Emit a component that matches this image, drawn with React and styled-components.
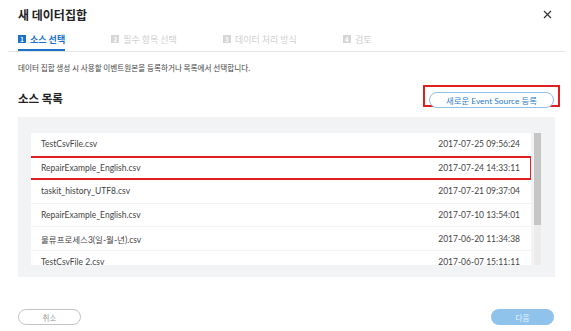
import React from "react";
import styled, { createGlobalStyle } from "styled-components";

const GlobalStyle = createGlobalStyle`
  html, body { margin: 0; padding: 0; background: #fff; }
  body { font-family: Lato, "Noto Sans CJK KR", sans-serif; color: #333; }
`;

const steps = [
  { no: 1, label: "소스 선택" },
  { no: 2, label: "필수 항목 선택" },
  { no: 3, label: "데이터 처리 방식" },
  { no: 4, label: "검토" },
];

const sources = [
  { name: "TestCsvFile.csv", date: "2017-07-25 09:56:24" },
  { name: "RepairExample_English.csv", date: "2017-07-24 14:33:11", picked: true },
  { name: "taskit_history_UTF8.csv", date: "2017-07-21 09:37:04" },
  { name: "RepairExample_English.csv", date: "2017-07-10 13:54:01" },
  { name: "물류프로세스3(일-월-년).csv", date: "2017-06-20 11:34:38" },
  { name: "TestCsvFile 2.csv", date: "2017-06-07 15:11:11" },
];

export default function App() {
  return (
    <>
      <GlobalStyle />
      <Dialog>
        <Header>
          <Title>새 데이터집합</Title>
          <CloseButton aria-label="close">
            <svg width="9" height="9" viewBox="0 0 9 9">
              <path d="M1 1 L8 8 M8 1 L1 8" stroke="#333" strokeWidth="1.2" />
            </svg>
          </CloseButton>
        </Header>

        <Tabs>
          {steps.map((s) => (
            <Tab key={s.no} $active={s.no === 1}>
              <Badge $active={s.no === 1}>{s.no}</Badge>
              {s.label}
            </Tab>
          ))}
        </Tabs>

        <Description>
          데이터 집합 생성 시 사용할 이벤트원본을 등록하거나 목록에서 선택합니다.
        </Description>

        <SectionHead>
          <SectionTitle>소스 목록</SectionTitle>
          <Highlight>
            <OutlineButton>새로운 Event Source 등록</OutlineButton>
          </Highlight>
        </SectionHead>

        <Panel>
          <Viewport>
            {sources.map((s, i) => (
              <Row key={i} $picked={s.picked}>
                <span>{s.name}</span>
                <span>{s.date}</span>
              </Row>
            ))}
          </Viewport>
          <ScrollTrack>
            <ScrollThumb />
          </ScrollTrack>
        </Panel>

        <Footer>
          <CancelButton>취소</CancelButton>
          <NextButton>다음</NextButton>
        </Footer>
      </Dialog>
    </>
  );
}

const Dialog = styled.div`
  width: 571px;
  height: 331px;
  overflow: hidden;
  display: flex;
  flex-direction: column;
`;

const Header = styled.div`
  display: flex;
  justify-content: space-between;
  align-items: center;
  height: 22px;
  padding: 3px 18px 0 18px;
`;

const Title = styled.h1`
  margin: 0;
  font-size: 12px;
  font-weight: 700;
  color: #222;
  font-family: "Noto Sans CJK KR", sans-serif;
`;

const CloseButton = styled.button`
  border: 0;
  background: none;
  padding: 0;
  display: flex;
  margin-right: 1px;
`;

const Tabs = styled.div`
  display: flex;
  gap: 46px;
  margin: 4px 6px 0 8px;
  padding-left: 10px;
  border-bottom: 1px solid #e4e4e4;
`;

const Tab = styled.div`
  display: flex;
  align-items: center;
  gap: 4px;
  height: 20px;
  font-size: 9px;
  font-weight: ${(p) => (p.$active ? 700 : 400)};
  font-family: "Noto Sans CJK KR", sans-serif;
  color: ${(p) => (p.$active ? "#1a73c8" : "#cfcfcf")};
  border-bottom: 2px solid ${(p) => (p.$active ? "#1a73c8" : "transparent")};
`;

const Badge = styled.span`
  display: inline-flex;
  align-items: center;
  justify-content: center;
  width: 8px;
  height: 8px;
  font-size: 6px;
  font-weight: 700;
  color: #fff;
  background: ${(p) => (p.$active ? "#1a73c8" : "#d6d6d6")};
`;

const Description = styled.p`
  margin: 10px 18px 0;
  font-size: 7.6px;
  color: #444;
  font-family: "Noto Sans CJK KR", sans-serif;
`;

const SectionHead = styled.div`
  display: flex;
  justify-content: space-between;
  align-items: flex-start;
  margin: 12px 11px 0 18px;
`;

const SectionTitle = styled.h2`
  margin: 5px 0 0;
  font-size: 11.5px;
  font-weight: 700;
  color: #222;
  font-family: "Noto Sans CJK KR", sans-serif;
`;

const Highlight = styled.div`
  border: 2px solid #e02020;
  padding: 1px 4px;
  width: 125px;
  height: 16px;
`;

const OutlineButton = styled.button`
  width: 100%;
  height: 16px;
  border: 1px solid #8ec0ea;
  border-radius: 9px;
  background: #fff;
  color: #2b7dc9;
  font-size: 8.4px;
  font-family: Lato, "Noto Sans CJK KR", sans-serif;
  padding: 0;
`;

const Panel = styled.div`
  display: flex;
  gap: 3px;
  margin: 10px 16px 0 18px;
  padding: 16px 14px 12px 13px;
  background: #f2f3f5;
`;

const Viewport = styled.div`
  flex: 1;
  height: 132px;
  overflow: hidden;
  display: flex;
  flex-direction: column;
  gap: 1px;
`;

const Row = styled.div`
  flex: none;
  display: flex;
  justify-content: space-between;
  align-items: center;
  height: 22.6px;
  padding: 0 11px 0 ${(p) => (p.$picked ? "12px" : "10px")};
  margin-left: ${(p) => (p.$picked ? "-2px" : "0")};
  background: #fff;
  font-size: 8.5px;
  color: #444;
  font-family: Lato, "Noto Sans CJK KR", sans-serif;
  outline: ${(p) => (p.$picked ? "2px solid #e02020" : "none")};
  outline-offset: -1px;
`;

const ScrollTrack = styled.div`
  width: 7px;
  height: 132px;
  background: #ececec;
`;

const ScrollThumb = styled.div`
  width: 7px;
  height: 92px;
  background: #c6c6c6;
`;

const Footer = styled.div`
  display: flex;
  justify-content: space-between;
  margin: 32px 17px 0 18px;
`;

const PillButton = styled.button`
  width: 63px;
  height: 16px;
  border-radius: 9px;
  font-size: 7.5px;
  font-family: "Noto Sans CJK KR", sans-serif;
  padding: 0;
`;

const CancelButton = styled(PillButton)`
  border: 1px solid #c4c4c4;
  background: #fff;
  color: #999;
`;

const NextButton = styled(PillButton)`
  border: 0;
  background: #90c3ec;
  color: #e8f3fc;
`;
